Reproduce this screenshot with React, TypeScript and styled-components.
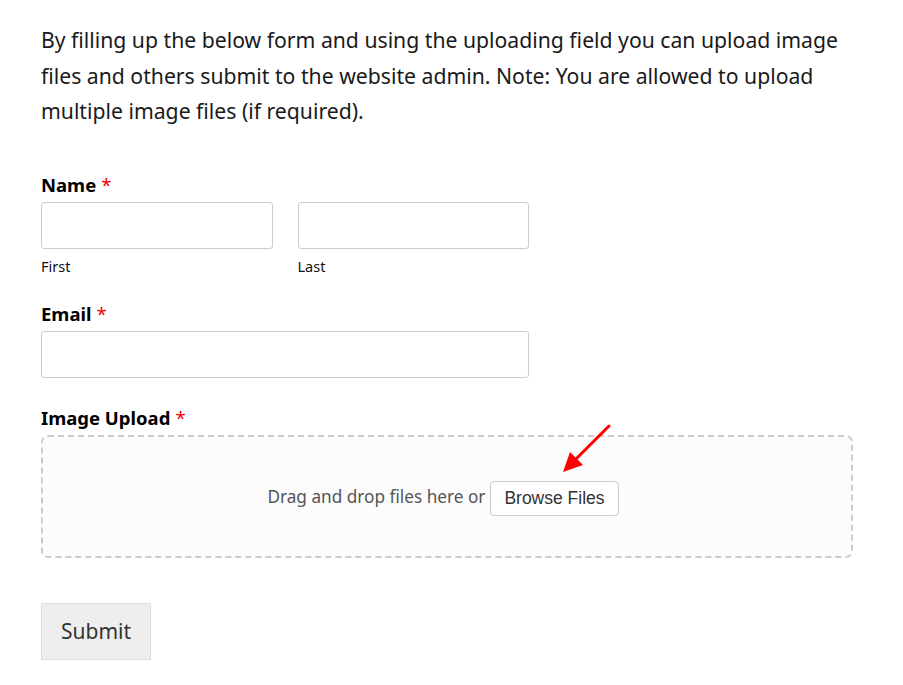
import React from "react";
import styled, { createGlobalStyle } from "styled-components";

const Global = createGlobalStyle`
  html, body { margin: 0; padding: 0; background: #fff; }
  body { font-family: "Noto Sans", "Open Sans", sans-serif; color: #111; }
  * { box-sizing: border-box; }
`;

const Page = styled.div`
  padding: 22px 50px 20px 41px;
  width: 903px;
`;

const Intro = styled.p`
  margin: 0;
  font-size: 21.2px;
  line-height: 35.5px;
  color: #1a1a1a;
`;

const Form = styled.form`
  margin-top: 44px;
  display: flex;
  flex-direction: column;
`;

const Field = styled.div<{ $gap?: number }>`
  display: flex;
  flex-direction: column;
  margin-bottom: ${(p) => p.$gap ?? 24}px;
`;

const Label = styled.label`
  font-size: 18.5px;
  font-weight: 700;
  line-height: 24px;
  color: #000;
  margin-bottom: 5px;
`;

const Req = styled.span`
  color: #e00;
  font-weight: 400;
  margin-left: 5px;
`;

const NameRow = styled.div`
  display: flex;
  gap: 25px;
  width: 488px;
`;

const NameCol = styled.div`
  flex: 1;
  display: flex;
  flex-direction: column;
`;

const Input = styled.input<{ $w?: number }>`
  width: ${(p) => (p.$w ? `${p.$w}px` : "100%")};
  height: 47px;
  border: 1px solid #ccc;
  border-radius: 3px;
  background: #fff;
  font-size: 16px;
  padding: 0 10px;
  outline: none;
`;

const SubLabel = styled.span`
  font-size: 14.5px;
  line-height: 20px;
  margin-top: 7px;
  color: #111;
`;

const DropZone = styled.div`
  position: relative;
  width: 812px;
  height: 123px;
  border: 2px dashed #ccc;
  border-radius: 7px;
  background: #fcfcfc;
  display: flex;
  align-items: center;
  justify-content: center;
  gap: 5px;
  padding-right: 8px;
`;

const DropText = styled.span`
  font-size: 17.2px;
  color: #555;
`;

const Browse = styled.button`
  font-family: "Liberation Sans", Arial, sans-serif;
  font-size: 17.5px;
  color: #333;
  background: #fff;
  border: 1px solid #ccc;
  border-radius: 4px;
  height: 35px;
  padding: 0 13px;
  margin-top: 4px;
`;

const Arrow = styled.svg`
  position: absolute;
  left: 518px;
  top: -13px;
  overflow: visible;
`;

const Submit = styled.button`
  margin-top: 21px;
  align-self: flex-start;
  width: 110px;
  height: 57px;
  background: #eee;
  border: 1px solid #ddd;
  font-family: "Noto Sans", "Open Sans", sans-serif;
  font-size: 21px;
  color: #333;
`;

export default function App() {
  return (
    <>
      <Global />
      <Page>
        <Intro>
          By filling up the below form and using the uploading field you can upload image files and others submit to the
          website admin. Note: You are allowed to upload multiple image files (if required).
        </Intro>
        <Form onSubmit={(e) => e.preventDefault()}>
          <Field $gap={26}>
            <Label>
              Name<Req>*</Req>
            </Label>
            <NameRow>
              <NameCol>
                <Input />
                <SubLabel>First</SubLabel>
              </NameCol>
              <NameCol>
                <Input />
                <SubLabel>Last</SubLabel>
              </NameCol>
            </NameRow>
          </Field>
          <Field $gap={28}>
            <Label>
              Email<Req>*</Req>
            </Label>
            <Input $w={488} />
          </Field>
          <Field $gap={24}>
            <Label>
              Image Upload<Req>*</Req>
            </Label>
            <DropZone>
              <DropText>Drag and drop files here or</DropText>
              <Browse type="button">Browse Files</Browse>
              <Arrow width="50" height="50" viewBox="0 0 50 50">
                <line x1="48" y1="2" x2="14" y2="36" stroke="#f00" strokeWidth="3" strokeLinecap="round" />
                <polygon points="2,48 9,28 22,41" fill="#f00" />
              </Arrow>
            </DropZone>
          </Field>
          <Submit type="submit">Submit</Submit>
        </Form>
      </Page>
    </>
  );
}
